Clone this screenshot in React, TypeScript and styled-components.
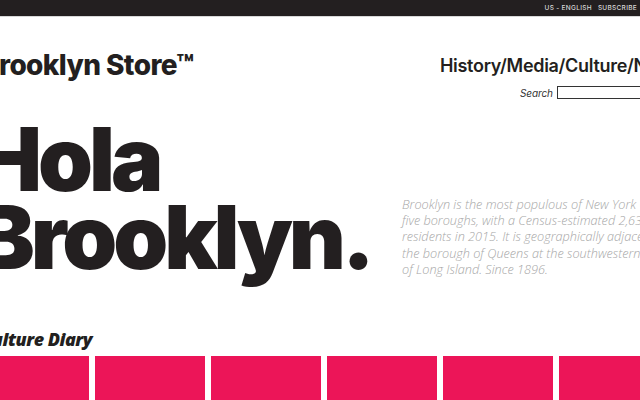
import React from "react";
import styled, { createGlobalStyle } from "styled-components";

const Global = createGlobalStyle`
  html, body { margin: 0; padding: 0; background: #ffffff; }
  body { width: 640px; height: 400px; overflow: hidden; font-family: "Inter", "Liberation Sans", sans-serif; color: #231f20; }
  * { box-sizing: border-box; }
`;

const TopBar = styled.div`
  height: 17px;
  background: #231f20;
  display: flex;
  justify-content: flex-end;
  align-items: center;
  gap: 6px;
  padding-right: 3px;
  border-bottom: 1px solid #d8d8d8;
`;

const TopLink = styled.span`
  font-family: "Inter", sans-serif;
  font-size: 6.5px;
  font-weight: 500;
  letter-spacing: 0.3px;
  color: #d6d6d6;
  text-transform: uppercase;
`;

const Page = styled.div`
  margin-left: -21px;
  width: 720px;
`;

const Header = styled.header`
  display: flex;
  justify-content: space-between;
  padding-top: 34px;
  height: 106px;
`;

const Logo = styled.div`
  font-size: 28px;
  font-weight: 800;
  letter-spacing: -0.6px;
  line-height: 1;
  margin-left: 2px;
`;

const HeaderRight = styled.div`
  width: 259px;
  display: flex;
  flex-direction: column;
  align-items: flex-start;
  padding-top: 6px;
`;

const Nav = styled.nav`
  font-size: 18px;
  font-weight: 600;
  white-space: nowrap;
  letter-spacing: -0.3px;
  line-height: 1;
`;

const SearchRow = styled.div`
  display: flex;
  align-items: center;
  gap: 4px;
  margin-top: 11px;
  margin-left: 80px;
`;

const SearchLabel = styled.label`
  font-size: 10px;
  font-style: italic;
  color: #333;
  letter-spacing: -0.1px;
`;

const SearchInput = styled.div`
  width: 120px;
  height: 13px;
  border: 1px solid #333;
  background: #fff;
`;

const Hero = styled.section`
  display: flex;
  align-items: flex-start;
  height: 206px;
`;

const Headline = styled.h1`
  margin: 0;
  width: 426px;
  font-size: 88px;
  font-weight: 900;
  line-height: 78px;
  letter-spacing: -4px;
  margin-left: -3px;
  margin-top: -3px;
`;

const Intro = styled.p`
  margin: 73px 0 0 0;
  font-family: "Open Sans", sans-serif;
  font-weight: 300;
  font-style: italic;
  font-size: 12.7px;
  line-height: 16.2px;
  color: #a6a6a6;
  white-space: nowrap;
`;

const SectionTitle = styled.h2`
  margin: 0 0 7px 2px;
  font-family: "Open Sans", sans-serif;
  font-style: italic;
  font-weight: 800;
  font-size: 18px;
  letter-spacing: -0.5px;
  line-height: 20px;
`;

const Cards = styled.div`
  display: flex;
  gap: 6px;
`;

const Card = styled.div`
  width: 110px;
  height: 60px;
  flex-shrink: 0;
  background: #ec1558;
`;

export default function App() {
  return (
    <>
      <Global />
      <TopBar>
        <TopLink>US - English</TopLink>
        <TopLink>Subscribe</TopLink>
      </TopBar>
      <Page>
        <Header>
          <Logo>Brooklyn Store™</Logo>
          <HeaderRight>
            <Nav>History/Media/Culture/News</Nav>
            <SearchRow>
              <SearchLabel>Search</SearchLabel>
              <SearchInput />
            </SearchRow>
          </HeaderRight>
        </Header>
        <Hero>
          <Headline>
            Hola
            <br />
            Brooklyn.
          </Headline>
          <Intro>
            Brooklyn is the most populous of New York City's
            <br />
            five boroughs, with a Census-estimated 2,636,735
            <br />
            residents in 2015. It is geographically adjacent to
            <br />
            the borough of Queens at the southwestern end
            <br />
            of Long Island. Since 1896.
          </Intro>
        </Hero>
        <SectionTitle>Culture Diary</SectionTitle>
        <Cards>
          {[0, 1, 2, 3, 4, 5].map((i) => (
            <Card key={i} />
          ))}
        </Cards>
      </Page>
    </>
  );
}
